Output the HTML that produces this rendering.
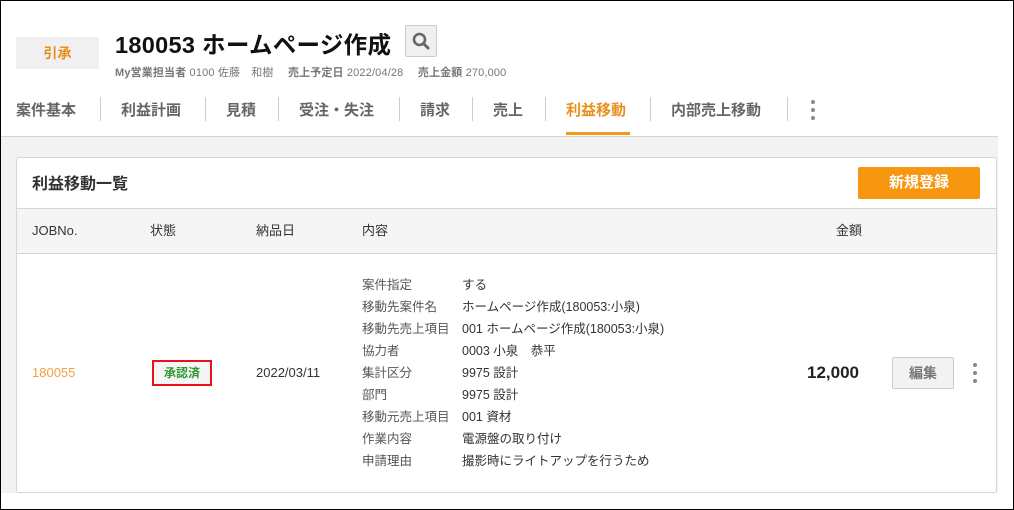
<!DOCTYPE html>
<html><head><meta charset="utf-8"><style>
*{box-sizing:border-box;margin:0;padding:0}
body{width:1014px;height:510px;overflow:hidden;background:#fff;font-family:"Liberation Sans","Noto Sans CJK JP",sans-serif;color:#333;position:relative}
.frame{position:absolute;left:0;top:0;width:1014px;height:510px;border:1px solid #000;z-index:10;pointer-events:none}
.abs{position:absolute;white-space:nowrap}
.gray{position:absolute;left:1px;top:136px;width:997px;height:357px;background:#f2f2f2;border-top:1px solid #d4d4d4}
.card{position:absolute;left:16px;top:157px;width:981px;height:336px;background:#fff;border:1px solid #d6d6d6;border-radius:3px}
.tab{position:absolute;top:99px;font-size:15px;font-weight:bold;color:#666}
.sep{position:absolute;top:97px;width:1px;height:24px;background:#ccc}
.lbl{color:#555}
.hd span{line-height:18px}
</style></head><body>
<div class="frame"></div>
<div class="abs" style="left:16px;top:37px;width:83px;height:32px;background:#f0f0f0;color:#e8901c;font-size:14px;font-weight:bold;text-align:center;line-height:32px">引承</div>
<div class="abs" style="left:115px;top:26px;font-size:23.5px;font-weight:bold;color:#111;letter-spacing:0.3px">180053 ホームページ作成</div>
<div class="abs" style="left:405px;top:25px;width:32px;height:32px;background:#f0f0f0;border:1px solid #ccc;border-radius:2px">
<svg width="30" height="30" viewBox="0 0 30 30"><circle cx="13.5" cy="13.5" r="5.5" fill="none" stroke="#666" stroke-width="2.6"/><line x1="17.5" y1="17.5" x2="22" y2="22" stroke="#666" stroke-width="3" stroke-linecap="round"/></svg></div>
<div class="abs" style="left:115px;top:64px;font-size:11px;color:#777;letter-spacing:0.15px"><b>My営業担当者</b> 0100 佐藤　和樹　 <b>売上予定日</b> 2022/04/28　 <b>売上金額</b> 270,000</div>
<div class="tab" style="left:16px">案件基本</div><div class="sep" style="left:100px"></div>
<div class="tab" style="left:121px">利益計画</div><div class="sep" style="left:205px"></div>
<div class="tab" style="left:226px">見積</div><div class="sep" style="left:278px"></div>
<div class="tab" style="left:299px">受注・失注</div><div class="sep" style="left:399px"></div>
<div class="tab" style="left:420px">請求</div><div class="sep" style="left:472px"></div>
<div class="tab" style="left:493px">売上</div><div class="sep" style="left:545px"></div>
<div class="tab" style="left:566px;color:#e8901c">利益移動</div><div class="abs" style="left:566px;top:132px;width:64px;height:3px;background:#f39a1a"></div><div class="sep" style="left:650px"></div>
<div class="tab" style="left:671px">内部売上移動</div><div class="sep" style="left:787px"></div>
<div class="abs" style="left:811px;top:100px;width:4px;height:20px"><div style="width:4px;height:4px;border-radius:2px;background:#888;margin-bottom:4px"></div><div style="width:4px;height:4px;border-radius:2px;background:#888;margin-bottom:4px"></div><div style="width:4px;height:4px;border-radius:2px;background:#888"></div></div>
<div class="gray"></div>
<div class="card">
<div class="abs" style="left:15px;top:12px;font-size:16px;font-weight:bold;color:#333">利益移動一覧</div>
<div class="abs" style="left:841px;top:9px;width:122px;height:32px;background:#f7960f;border-radius:2px;color:#fff;font-weight:bold;font-size:15px;text-align:center;line-height:32px">新規登録</div>
<div class="abs hd" style="left:0;top:50px;width:979px;height:46px;background:#f5f5f5;border-top:1px solid #d6d6d6;border-bottom:1px solid #d6d6d6;font-size:13px;color:#333">
<span class="abs" style="left:15px;top:13px">JOBNo.</span><span class="abs" style="left:133px;top:13px">状態</span><span class="abs" style="left:239px;top:13px">納品日</span><span class="abs" style="left:345px;top:13px">内容</span><span class="abs" style="left:819px;top:13px">金額</span></div>
<div class="abs" style="left:15px;top:207px;font-size:13px;color:#f0a040">180055</div>
<div class="abs" style="left:135px;top:202px;width:60px;height:26px;border:2px solid #e8111a;background:#f5f5f5;color:#2f9a2f;font-size:12px;font-weight:bold;text-align:center;line-height:22px">承認済</div>
<div class="abs" style="left:239px;top:207px;font-size:13px;color:#333">2022/03/11</div>
<div class="abs" style="left:345px;top:116px;font-size:12.5px;line-height:22px">
<div><span class="lbl" style="display:inline-block;width:100px">案件指定</span>する</div>
<div><span class="lbl" style="display:inline-block;width:100px">移動先案件名</span>ホームページ作成(180053:小泉)</div>
<div><span class="lbl" style="display:inline-block;width:100px">移動先売上項目</span>001 ホームページ作成(180053:小泉)</div>
<div><span class="lbl" style="display:inline-block;width:100px">協力者</span>0003 小泉　恭平</div>
<div><span class="lbl" style="display:inline-block;width:100px">集計区分</span>9975 設計</div>
<div><span class="lbl" style="display:inline-block;width:100px">部門</span>9975 設計</div>
<div><span class="lbl" style="display:inline-block;width:100px">移動元売上項目</span>001 資材</div>
<div><span class="lbl" style="display:inline-block;width:100px">作業内容</span>電源盤の取り付け</div>
<div><span class="lbl" style="display:inline-block;width:100px">申請理由</span>撮影時にライトアップを行うため</div>
</div>
<div class="abs" style="left:790px;top:205px;font-size:17px;font-weight:bold;color:#222">12,000</div>
<div class="abs" style="left:875px;top:199px;width:62px;height:32px;background:#f2f2f2;border:1px solid #ccc;border-radius:2px;color:#777;font-size:14px;font-weight:bold;text-align:center;line-height:30px">編集</div>
<div class="abs" style="left:956px;top:205px;width:4px"><div style="width:4px;height:4px;border-radius:2px;background:#888;margin-bottom:4px"></div><div style="width:4px;height:4px;border-radius:2px;background:#888;margin-bottom:4px"></div><div style="width:4px;height:4px;border-radius:2px;background:#888"></div></div>
</div>
</body></html>
